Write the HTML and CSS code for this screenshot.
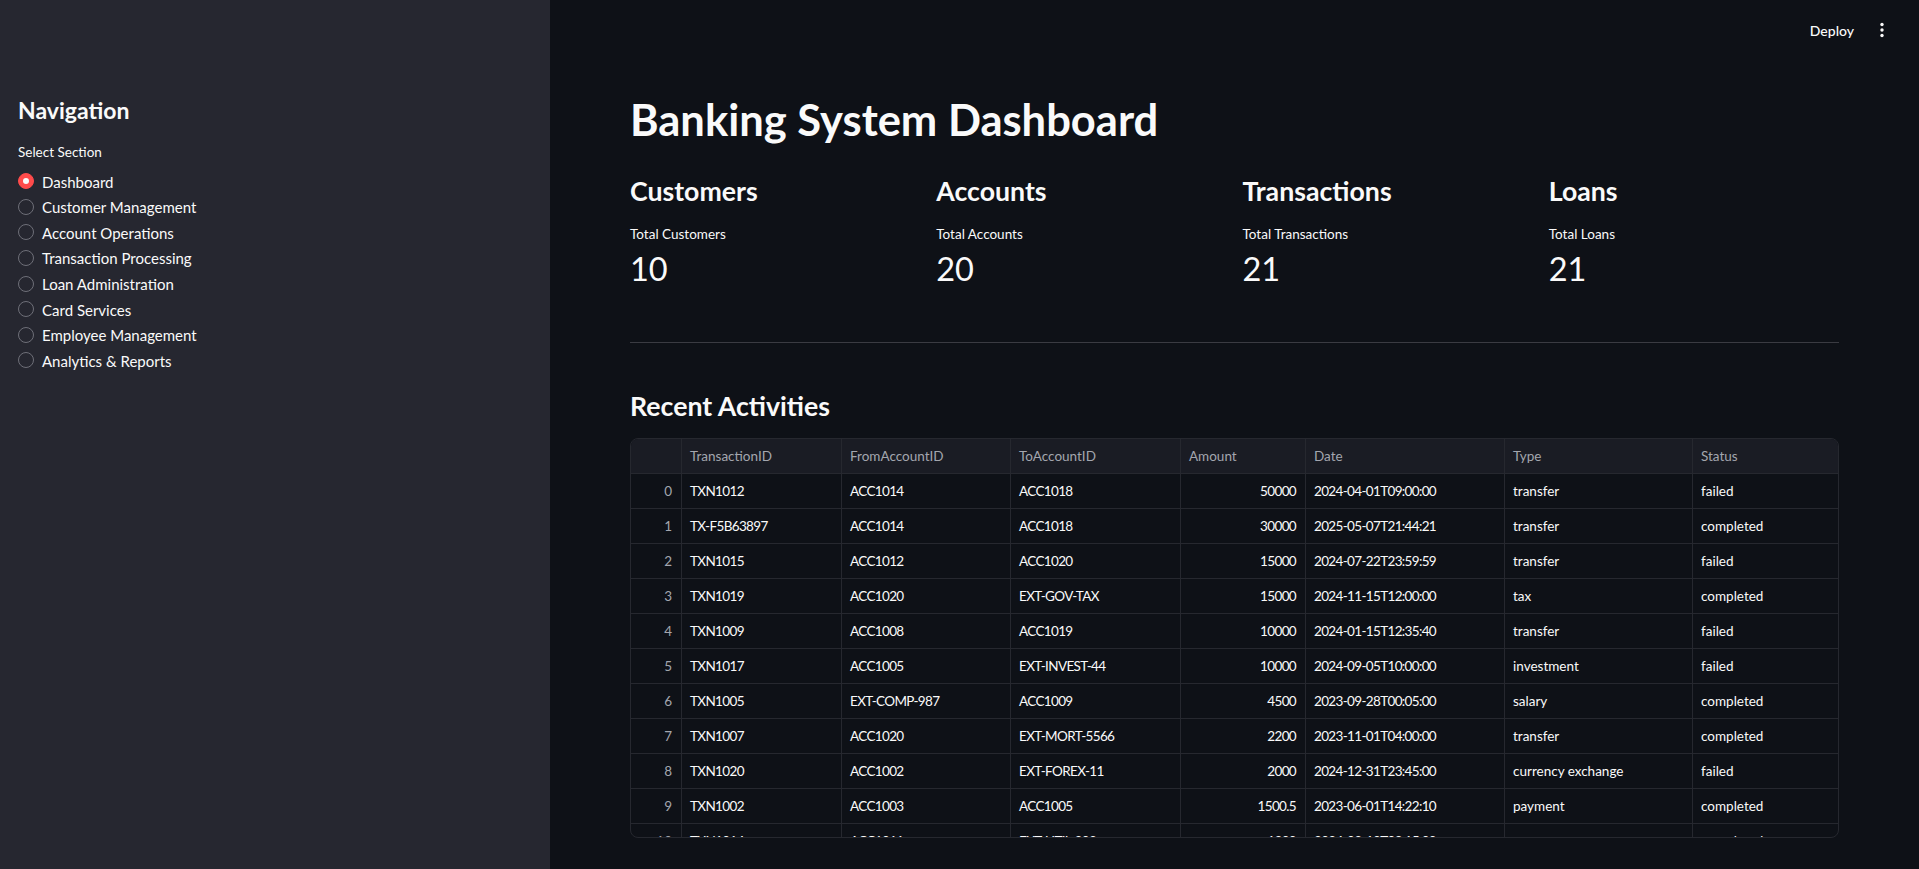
FILE: index.html
```html
<!DOCTYPE html>
<html lang="en">
<head>
<meta charset="utf-8">
<title>Banking System Dashboard</title>
<link rel="stylesheet" href="styles.css">
</head>
<body>
<div class="app">
  <aside class="sidebar">
    <h2 class="side-title">Navigation</h2>
    <div class="side-label">Select Section</div>
    <div class="radio-group">
      <div class="radio-item"><span class="radio radio-on"><span class="radio-dot"></span></span><span class="radio-text">Dashboard</span></div>
      <div class="radio-item"><span class="radio"></span><span class="radio-text">Customer Management</span></div>
      <div class="radio-item"><span class="radio"></span><span class="radio-text">Account Operations</span></div>
      <div class="radio-item"><span class="radio"></span><span class="radio-text">Transaction Processing</span></div>
      <div class="radio-item"><span class="radio"></span><span class="radio-text">Loan Administration</span></div>
      <div class="radio-item"><span class="radio"></span><span class="radio-text">Card Services</span></div>
      <div class="radio-item"><span class="radio"></span><span class="radio-text">Employee Management</span></div>
      <div class="radio-item"><span class="radio"></span><span class="radio-text">Analytics &amp; Reports</span></div>
    </div>
  </aside>
  <main class="main">
    <header class="toolbar">
      <span class="deploy">Deploy</span>
      <svg class="kebab" width="16" height="16" viewBox="0 0 16 16" aria-hidden="true">
        <circle cx="8" cy="2.5" r="1.7" fill="#fafafa"/>
        <circle cx="8" cy="8" r="1.7" fill="#fafafa"/>
        <circle cx="8" cy="13.5" r="1.7" fill="#fafafa"/>
      </svg>
    </header>
    <div class="content">
      <h1 class="page-title">Banking System Dashboard</h1>
      <div class="metrics">
        <div class="metric">
          <h3 class="metric-head">Customers</h3>
          <div class="metric-label">Total Customers</div>
          <div class="metric-value">10</div>
        </div>
        <div class="metric">
          <h3 class="metric-head">Accounts</h3>
          <div class="metric-label">Total Accounts</div>
          <div class="metric-value">20</div>
        </div>
        <div class="metric">
          <h3 class="metric-head">Transactions</h3>
          <div class="metric-label">Total Transactions</div>
          <div class="metric-value">21</div>
        </div>
        <div class="metric">
          <h3 class="metric-head">Loans</h3>
          <div class="metric-label">Total Loans</div>
          <div class="metric-value">21</div>
        </div>
      </div>
      <hr class="divider">
      <h3 class="section-head">Recent Activities</h3>
      <div class="grid">
        <div class="row head">
          <div class="cell"></div><div class="cell">TransactionID</div><div class="cell">FromAccountID</div><div class="cell">ToAccountID</div><div class="cell">Amount</div><div class="cell">Date</div><div class="cell">Type</div><div class="cell">Status</div>
        </div>
        <div class="row"><div class="cell idx">0</div><div class="cell">TXN1012</div><div class="cell">ACC1014</div><div class="cell">ACC1018</div><div class="cell num">50000</div><div class="cell">2024-04-01T09:00:00</div><div class="cell">transfer</div><div class="cell">failed</div></div>
        <div class="row"><div class="cell idx">1</div><div class="cell">TX-F5B63897</div><div class="cell">ACC1014</div><div class="cell">ACC1018</div><div class="cell num">30000</div><div class="cell">2025-05-07T21:44:21</div><div class="cell">transfer</div><div class="cell">completed</div></div>
        <div class="row"><div class="cell idx">2</div><div class="cell">TXN1015</div><div class="cell">ACC1012</div><div class="cell">ACC1020</div><div class="cell num">15000</div><div class="cell">2024-07-22T23:59:59</div><div class="cell">transfer</div><div class="cell">failed</div></div>
        <div class="row"><div class="cell idx">3</div><div class="cell">TXN1019</div><div class="cell">ACC1020</div><div class="cell">EXT-GOV-TAX</div><div class="cell num">15000</div><div class="cell">2024-11-15T12:00:00</div><div class="cell">tax</div><div class="cell">completed</div></div>
        <div class="row"><div class="cell idx">4</div><div class="cell">TXN1009</div><div class="cell">ACC1008</div><div class="cell">ACC1019</div><div class="cell num">10000</div><div class="cell">2024-01-15T12:35:40</div><div class="cell">transfer</div><div class="cell">failed</div></div>
        <div class="row"><div class="cell idx">5</div><div class="cell">TXN1017</div><div class="cell">ACC1005</div><div class="cell">EXT-INVEST-44</div><div class="cell num">10000</div><div class="cell">2024-09-05T10:00:00</div><div class="cell">investment</div><div class="cell">failed</div></div>
        <div class="row"><div class="cell idx">6</div><div class="cell">TXN1005</div><div class="cell">EXT-COMP-987</div><div class="cell">ACC1009</div><div class="cell num">4500</div><div class="cell">2023-09-28T00:05:00</div><div class="cell">salary</div><div class="cell">completed</div></div>
        <div class="row"><div class="cell idx">7</div><div class="cell">TXN1007</div><div class="cell">ACC1020</div><div class="cell">EXT-MORT-5566</div><div class="cell num">2200</div><div class="cell">2023-11-01T04:00:00</div><div class="cell">transfer</div><div class="cell">completed</div></div>
        <div class="row"><div class="cell idx">8</div><div class="cell">TXN1020</div><div class="cell">ACC1002</div><div class="cell">EXT-FOREX-11</div><div class="cell num">2000</div><div class="cell">2024-12-31T23:45:00</div><div class="cell">currency exchange</div><div class="cell">failed</div></div>
        <div class="row"><div class="cell idx">9</div><div class="cell">TXN1002</div><div class="cell">ACC1003</div><div class="cell">ACC1005</div><div class="cell num">1500.5</div><div class="cell">2023-06-01T14:22:10</div><div class="cell">payment</div><div class="cell">completed</div></div>
        <div class="row"><div class="cell idx">10</div><div class="cell">TXN1014</div><div class="cell">ACC1011</div><div class="cell">EXT-UTIL-302</div><div class="cell num">1200</div><div class="cell">2024-03-10T08:15:00</div><div class="cell">payment</div><div class="cell">completed</div></div>
      </div>
    </div>
  </main>
</div>
</body>
</html>
```
FILE: styles.css
```css
* { box-sizing: border-box; }
html, body { margin: 0; padding: 0; height: 100%; }
body {
  background: #0e1117;
  color: #fafafa;
  font-family: Lato, "Noto Sans", "Liberation Sans", sans-serif;
  overflow: hidden;
}
.app { display: flex; height: 869px; }

.sidebar {
  width: 550px;
  flex: 0 0 550px;
  background: #262730;
  padding: 94px 18px 0 18px;
}
.side-title {
  margin: 0;
  font-size: 23px;
  font-weight: 700;
  line-height: 32px;
  height: 32px;
}
.side-label {
  margin-top: 16px;
  font-size: 13.5px;
  line-height: 20px;
  height: 20px;
}
.radio-group { margin-top: 7px; display: flex; flex-direction: column; }
.radio-item {
  display: flex;
  align-items: center;
  height: 25.57px;
  font-size: 15px;
}
.radio {
  width: 16px; height: 16px;
  border-radius: 50%;
  border: 1px solid #6e6f78;
  margin-bottom: 1px;
  flex: 0 0 16px;
  display: flex; align-items: center; justify-content: center;
}
.radio-on { background: #ff4b4b; border-color: #ff4b4b; }
.radio-dot { width: 6px; height: 6px; border-radius: 50%; background: #fafafa; }
.radio-text { margin-left: 8px; }

.main { flex: 1; display: flex; flex-direction: column; }
.toolbar {
  height: 60px;
  display: flex;
  justify-content: flex-end;
  align-items: center;
  padding-right: 29px;
  gap: 20px;
}
.deploy { font-size: 14px; font-weight: 500; }
.kebab { display: block; }

.content { padding: 29px 80px 0 80px; }
.page-title {
  margin: 0;
  font-size: 43.5px;
  font-weight: 700;
  line-height: 60px;
  height: 60px;
}
.metrics {
  margin-top: 22px;
  display: grid;
  grid-template-columns: repeat(4, 1fr);
  gap: 16px;
}
.metric-head {
  margin: 0;
  font-size: 26.7px;
  font-weight: 700;
  line-height: 40px;
  height: 40px;
}
.metric-label {
  margin-top: 13px;
  font-size: 13.5px;
  line-height: 21px;
  height: 21px;
}
.metric-value {
  margin-top: 2px;
  font-size: 32.5px;
  font-weight: 400;
  line-height: 44px;
  height: 44px;
}
.divider {
  margin: 51px 0 0 0;
  border: 0;
  height: 1px;
  background: #3a3b42;
}
.section-head {
  margin: 43px 0 0 0;
  font-size: 26.7px;
  font-weight: 700;
  line-height: 40px;
  height: 40px;
}
.grid {
  margin-top: 12px;
  height: 400px;
  border: 1px solid #26282f;
  border-radius: 8px;
  overflow: hidden;
  font-size: 13.5px;
}
.row {
  display: grid;
  grid-template-columns: 51px 160px 169px 170px 125px 199px 188px 1fr;
  height: 35px;
  border-bottom: 1px solid #26282f;
}
.row.head { background: #1a1c24; color: #a3a6ae; }
.cell {
  display: flex;
  align-items: center;
  padding: 0 8px;
  border-right: 1px solid #26282f;
  white-space: nowrap;
  overflow: hidden;
}
.cell:last-child { border-right: 0; }
.idx { justify-content: flex-end; color: #a3a6ae; padding-right: 9px; }
.num { justify-content: flex-end; padding-right: 9px; }
.row:not(.head) .cell:nth-child(n+2):nth-child(-n+6) { letter-spacing: -0.65px; }
```
